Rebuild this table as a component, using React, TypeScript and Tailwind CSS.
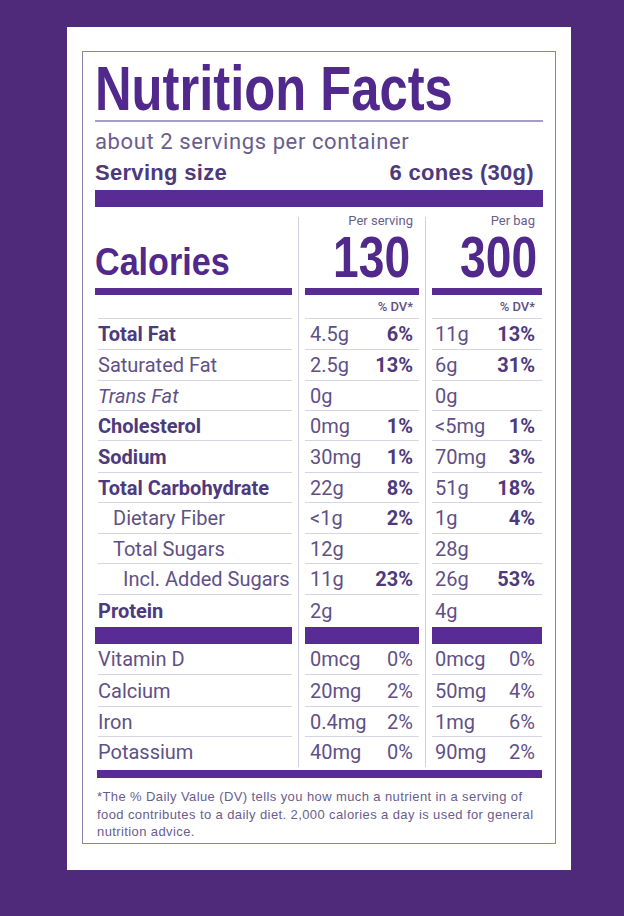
import clsx from "clsx";

type Row = {
  label: string;
  style: "bold" | "normal" | "italic";
  indent?: string;
  a: string;
  ap?: string;
  b: string;
  bp?: string;
  h: string;
  last?: boolean;
  plainPct?: boolean;
};

const nutrients: Row[] = [
  { label: "Total Fat", style: "bold", a: "4.5g", ap: "6%", b: "11g", bp: "13%", h: "h-[31px]" },
  { label: "Saturated Fat", style: "normal", a: "2.5g", ap: "13%", b: "6g", bp: "31%", h: "h-[31px]" },
  { label: "Trans Fat", style: "italic", a: "0g", b: "0g", h: "h-[30px]" },
  { label: "Cholesterol", style: "bold", a: "0mg", ap: "1%", b: "<5mg", bp: "1%", h: "h-[30px]" },
  { label: "Sodium", style: "bold", a: "30mg", ap: "1%", b: "70mg", bp: "3%", h: "h-[32px]" },
  { label: "Total Carbohydrate", style: "bold", a: "22g", ap: "8%", b: "51g", bp: "18%", h: "h-[30px]" },
  { label: "Dietary Fiber", style: "normal", indent: "pl-[15px]", a: "<1g", ap: "2%", b: "1g", bp: "4%", h: "h-[31px]" },
  { label: "Total Sugars", style: "normal", indent: "pl-[15px]", a: "12g", b: "28g", h: "h-[30px]" },
  { label: "Incl. Added Sugars", style: "normal", indent: "pl-[25px]", a: "11g", ap: "23%", b: "26g", bp: "53%", h: "h-[31px]" },
  { label: "Protein", style: "bold", a: "2g", b: "4g", h: "h-[32px]", last: true },
];

const minerals: Row[] = [
  { label: "Vitamin D", style: "normal", a: "0mcg", ap: "0%", b: "0mcg", bp: "0%", h: "h-[31px]", plainPct: true },
  { label: "Calcium", style: "normal", a: "20mg", ap: "2%", b: "50mg", bp: "4%", h: "h-[32px]", plainPct: true },
  { label: "Iron", style: "normal", a: "0.4mg", ap: "2%", b: "1mg", bp: "6%", h: "h-[30px]", plainPct: true },
  { label: "Potassium", style: "normal", a: "40mg", ap: "0%", b: "90mg", bp: "2%", h: "h-[30px]", plainPct: true, last: true },
];

const grid = "grid grid-cols-[197px_13px_114px_13px_110px]";

const Divider = ({ top }: { top?: boolean }) => (
  <div className={clsx("flex justify-center", top && "pt-[10px]")}>
    <div className="w-px bg-[#d3cde0]" />
  </div>
);

const NutrientRow = ({ row }: { row: Row }) => {
  const line = row.last ? "" : "border-b border-[#d9d4e4]";
  const pct = row.plainPct ? "font-normal text-[#5f5186]" : "font-bold text-[#4d3a7c]";
  return (
    <div className={clsx(grid, row.h, "text-[20px] leading-none")}>
      <div className={clsx("ml-[3px] flex items-center", line)}>
        <span
          className={clsx(
            row.indent,
            row.style === "bold" && "font-bold text-[#4d3a7c]",
            row.style === "normal" && "text-[#5f5186]",
            row.style === "italic" && "italic text-[#5f5186]"
          )}
        >
          {row.label}
        </span>
      </div>
      <Divider />
      <div className={clsx("flex items-center justify-between pl-[5px] pr-[6px]", line)}>
        <span className="text-[#5f5186]">{row.a}</span>
        <span className={pct}>{row.ap}</span>
      </div>
      <Divider />
      <div className={clsx("flex items-center justify-between pl-[3px] pr-[7px]", line)}>
        <span className="text-[#5f5186]">{row.b}</span>
        <span className={pct}>{row.bp}</span>
      </div>
    </div>
  );
};

const BarRow = ({ h }: { h: string }) => (
  <div className={clsx(grid, h)}>
    <div className="bg-[#592b94]" />
    <Divider />
    <div className="bg-[#592b94]" />
    <Divider />
    <div className="bg-[#592b94]" />
  </div>
);

const display = "font-bold text-[#51288b] font-[family-name:'Liberation_Sans',Arial,sans-serif]";

export default function App() {
  return (
    <div className="min-h-[916px] bg-[#4f2a7b] pl-[67px] pt-[27px] font-[family-name:Roboto,sans-serif]">
      <div className="w-[504px] h-[843px] bg-white px-[15px] pt-[24px]">
        <div className="h-[793px] border border-[#8f81b0] px-[12px] pt-[5px]">
          <h1 className="h-[63px] text-[63px] leading-none whitespace-nowrap">
            <span className={clsx(display, "inline-block origin-left scale-x-[0.805]")}>Nutrition Facts</span>
          </h1>
          <div className="h-[2px] bg-[#a79dc2]" />

          <p className="mt-[7px] text-[22px] leading-[26px] tracking-[0.6px] text-[#6a5d8e]">
            about 2 servings per container
          </p>
          <div className="mt-[5px] flex justify-between pr-[9px] text-[22px] leading-[26px] tracking-[0.3px] font-bold text-[#4d3a7c] font-[family-name:'Liberation_Sans',Arial,sans-serif]">
            <span>Serving size</span>
            <span>6 cones (30g)</span>
          </div>
          <div className="mt-[4px] h-[17px] bg-[#592b94]" />

          {/* calories */}
          <div className={clsx(grid, "h-[81px]")}>
            <div className="flex items-end pb-[7px]">
              <span className={clsx(display, "inline-block origin-left scale-x-[0.875] text-[39px] leading-none")}>
                Calories
              </span>
            </div>
            <Divider top />
            <div className="flex flex-col items-end pt-[7px]">
              <span className="pr-[6px] text-[13px] leading-none text-[#6a5d8e]">Per serving</span>
              <span className={clsx(display, "mt-[2px] mr-[9px] inline-block origin-right scale-x-[0.81] text-[57px] leading-none")}>
                130
              </span>
            </div>
            <Divider top />
            <div className="flex flex-col items-end pt-[7px]">
              <span className="pr-[7px] text-[13px] leading-none text-[#6a5d8e]">Per bag</span>
              <span className={clsx(display, "mt-[2px] mr-[5px] inline-block origin-right scale-x-[0.81] text-[57px] leading-none")}>
                300
              </span>
            </div>
          </div>
          <BarRow h="h-[7px]" />

          {/* %DV header */}
          <div className={clsx(grid, "h-[24px] text-[13px] leading-none font-medium text-[#5f5186]")}>
            <div className="ml-[3px] border-b border-[#d9d4e4]" />
            <Divider />
            <div className="flex justify-end border-b border-[#d9d4e4] pr-[6px] pt-[5px]">% DV*</div>
            <Divider />
            <div className="flex justify-end border-b border-[#d9d4e4] pr-[7px] pt-[5px]">% DV*</div>
          </div>

          {nutrients.map((r) => (
            <NutrientRow key={r.label} row={r} />
          ))}

          <BarRow h="h-[17px]" />

          {minerals.map((r) => (
            <NutrientRow key={r.label} row={r} />
          ))}

          <div className="ml-[2px] mr-[1px] mt-[3px] h-[8px] bg-[#592b94]" />

          <p className="ml-[2px] mt-[10px] text-[13px] leading-[17.5px] tracking-[0.4px] text-[#6a5d8e] font-[family-name:'Liberation_Sans',Arial,sans-serif]">
            *The % Daily Value (DV) tells you how much a nutrient in a serving of
            <br />
            food contributes to a daily diet. 2,000 calories a day is used for general
            <br />
            nutrition advice.
          </p>
        </div>
      </div>
    </div>
  );
}
